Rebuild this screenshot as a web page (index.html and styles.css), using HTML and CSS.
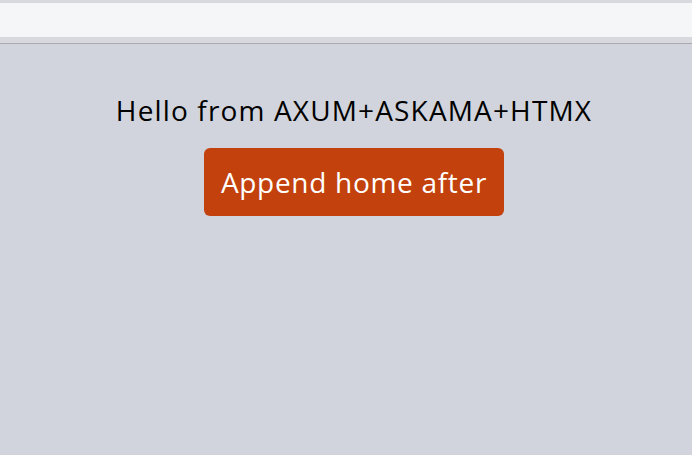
FILE: index.html
```html
<!DOCTYPE html>
<html lang="en">
<head>
    <meta charset="UTF-8">
    <meta name="viewport" content="width=device-width, initial-scale=1.0">
    <title>Axum Askama Htmx</title>
    <link rel="stylesheet" href="styles.css">
</head>
<body>
    <div class="topbar">
        <div class="topbar-inner"></div>
    </div>

    <main class="content">
        <h1 class="greeting">Hello from AXUM+ASKAMA+HTMX</h1>
        <button class="btn">Append home after</button>
    </main>
</body>
</html>
```

FILE: styles.css
```css
:root {
    --page-bg: #d1d4dc;
    --bar-bg: #d8d9de;
    --bar-light: #f5f6f8;
    --bar-line: #a9abb0;
    --accent: #c2410c;
}

body {
    margin: 0;
    padding: 0;
    background-color: var(--page-bg);
    font-family: 'Open Sans', 'Noto Sans', sans-serif;
    color: #000000;
}

.topbar {
    background-color: var(--bar-bg);
    padding: 3px 0 6px;
    border-bottom: 1px solid var(--bar-line);
}

.topbar-inner {
    height: 34px;
    background-color: var(--bar-light);
}

.content {
    display: flex;
    flex-direction: column;
    align-items: center;
    padding: 48px 0 0 16px;
}

.greeting {
    margin: 0;
    font-size: 28px;
    font-weight: 400;
    line-height: 36px;
    letter-spacing: 1.15px;
}

.btn {
    margin-top: 20px;
    padding: 16px 17px;
    background-color: var(--accent);
    color: #ffffff;
    border: none;
    border-radius: 6px;
    font-family: inherit;
    font-size: 28px;
    line-height: 36px;
    letter-spacing: 0.7px;
    cursor: pointer;
}
```
